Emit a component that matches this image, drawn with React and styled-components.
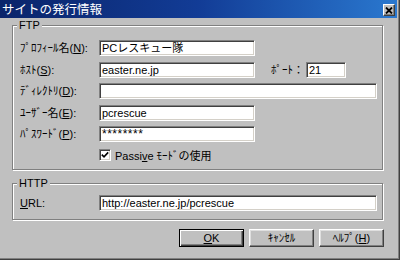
import React from 'react';
import styled, { createGlobalStyle } from 'styled-components';

const Global = createGlobalStyle`
  html, body { margin: 0; padding: 0; background: #c0c0c0; }
  body { font-family: "Liberation Sans", "Noto Sans CJK JP", sans-serif; }
  * { box-sizing: border-box; }
`;

const Window = styled.div`
  width: 400px;
  height: 260px;
  background: #c0c0c0;
  border-right: 1px solid #404040;
  border-bottom: 1px solid #404040;
  box-shadow: inset -1px -1px 0 #808080;
  padding: 0 2px 2px 0;
  display: flex;
  flex-direction: column;
  font-size: 11px;
  color: #000;
  overflow: hidden;
`;

const TitleBar = styled.div`
  height: 18px;
  flex: none;
  background: linear-gradient(90deg, #0a246a 0%, #123c96 50%, #2a78cf 100%);
  display: flex;
  align-items: center;
  justify-content: space-between;
  padding: 0 2px 0 2px;
`;

const Title = styled.span`
  color: #fff;
  font-family: "Noto Sans CJK JP", sans-serif;
  font-size: 12.5px;
  line-height: 18px;
`;

const CloseButton = styled.div`
  width: 12px;
  height: 12px;
  margin-top: 2px;
  background: #c0c0c0;
  border: 1px solid;
  border-color: #fff #404040 #404040 #fff;
  box-shadow: inset -1px -1px 0 #808080;
  display: flex;
  align-items: center;
  justify-content: center;
`;

const Body = styled.div`
  flex: 1;
  padding: 7px 14px 0 12px;
  display: flex;
  flex-direction: column;
`;

const GroupBox = styled.div`
  position: relative;
  border: 1px solid #808080;
  box-shadow: inset 1px 1px 0 #fff, 1px 1px 0 #fff;
  padding: ${p => p.$pad};
  margin-top: ${p => p.$mt || 0}px;
  display: flex;
  flex-direction: column;
`;

const Legend = styled.span`
  position: absolute;
  top: -7px;
  left: 4px;
  padding: 0 2px;
  background: #c0c0c0;
  line-height: 12px;
`;

const Rows = styled.div`
  display: flex;
  flex-direction: column;
  gap: 5.5px;
`;

const Row = styled.div`
  display: flex;
  align-items: center;
  height: 16px;
`;

const Label = styled.span`
  width: ${p => p.$w || 79}px;
  margin-left: ${p => p.$ml || 0}px;
  flex: none;
  line-height: 14px;
  white-space: nowrap;
`;

const TextBox = styled.div`
  width: ${p => p.$w}px;
  height: 16px;
  flex: none;
  background: #fff;
  border: 1px solid;
  border-color: #808080 #fff #fff #808080;
  box-shadow: inset 1px 1px 0 #404040, inset -1px -1px 0 #d4d0c8;
  padding: 0 2px 0 2px;
  font-size: ${p => (p.$masked ? 12 : 11)}px;
  letter-spacing: ${p => (p.$masked ? 0.5 : 0)}px;
  line-height: 14px;
  white-space: nowrap;
  overflow: hidden;
`;

const CheckRow = styled.div`
  display: flex;
  align-items: center;
  height: 12px;
  margin-top: 7px;
  padding-left: 79px;
  gap: 4px;
`;

const CheckBox = styled.div`
  width: 12px;
  height: 12px;
  background: #fff;
  border: 1px solid;
  border-color: #808080 #fff #fff #808080;
  box-shadow: inset 1px 1px 0 #404040, inset -1px -1px 0 #d4d0c8;
  display: flex;
  align-items: center;
  justify-content: center;
`;

const ButtonRow = styled.div`
  display: flex;
  justify-content: flex-end;
  gap: 5px;
  margin-top: 9px;
  margin-right: -1px;
`;

const Button = styled.div`
  width: 65px;
  height: 18px;
  border: 1px solid;
  border-color: ${p => (p.$default ? '#000' : '#fff #404040 #404040 #fff')};
  box-shadow: ${p =>
    p.$default
      ? 'inset 1px 1px 0 #fff, inset -1px -1px 0 #404040, inset -2px -2px 0 #808080'
      : 'inset -1px -1px 0 #808080, inset 1px 1px 0 #dfdfdf'};
  display: flex;
  align-items: center;
  justify-content: center;
  line-height: 14px;
  white-space: nowrap;
`;

export default function App() {
  return (
    <>
      <Global />
      <Window>
        <TitleBar>
          <Title>サイトの発行情報</Title>
          <CloseButton>
            <svg width="8" height="7" viewBox="0 0 8 7">
              <path d="M1 0.5 L7 6.5 M7 0.5 L1 6.5" stroke="#000" strokeWidth="1.8" />
            </svg>
          </CloseButton>
        </TitleBar>
        <Body>
          <GroupBox $pad="14px 7px 8px 7px">
            <Legend>FTP</Legend>
            <Rows>
              <Row>
                <Label>ﾌﾟﾛﾌｨｰﾙ名(<u>N</u>):</Label>
                <TextBox $w={156}>PCレスキュー隊</TextBox>
              </Row>
              <Row>
                <Label>ﾎｽﾄ(<u>S</u>):</Label>
                <TextBox $w={156}>easter.ne.jp</TextBox>
                <Label $w={35} $ml={16}>ﾎﾟｰﾄ：</Label>
                <TextBox $w={40}>21</TextBox>
              </Row>
              <Row>
                <Label>ﾃﾞｨﾚｸﾄﾘ(<u>D</u>):</Label>
                <TextBox $w={278}></TextBox>
              </Row>
              <Row>
                <Label>ﾕｰｻﾞｰ名(<u>E</u>):</Label>
                <TextBox $w={156}>pcrescue</TextBox>
              </Row>
              <Row>
                <Label>ﾊﾟｽﾜｰﾄﾞ(<u>P</u>):</Label>
                <TextBox $w={156} $masked>********</TextBox>
              </Row>
            </Rows>
            <CheckRow>
              <CheckBox>
                <svg width="8" height="8" viewBox="0 0 8 8">
                  <path d="M0.8 3.6 L3 5.8 L7.2 1.4" stroke="#000" strokeWidth="1.6" fill="none" />
                </svg>
              </CheckBox>
              <span>Passi<u>v</u>e ﾓｰﾄﾞの使用</span>
            </CheckRow>
          </GroupBox>
          <GroupBox $pad="11px 7px 8px 7px" $mt={13}>
            <Legend>HTTP</Legend>
            <Row>
              <Label><u>U</u>RL:</Label>
              <TextBox $w={278}>http://easter.ne.jp/pcrescue</TextBox>
            </Row>
          </GroupBox>
          <ButtonRow>
            <Button $default><u>O</u>K</Button>
            <Button>ｷｬﾝｾﾙ</Button>
            <Button>ﾍﾙﾌﾟ(<u>H</u>)</Button>
          </ButtonRow>
        </Body>
      </Window>
    </>
  );
}
